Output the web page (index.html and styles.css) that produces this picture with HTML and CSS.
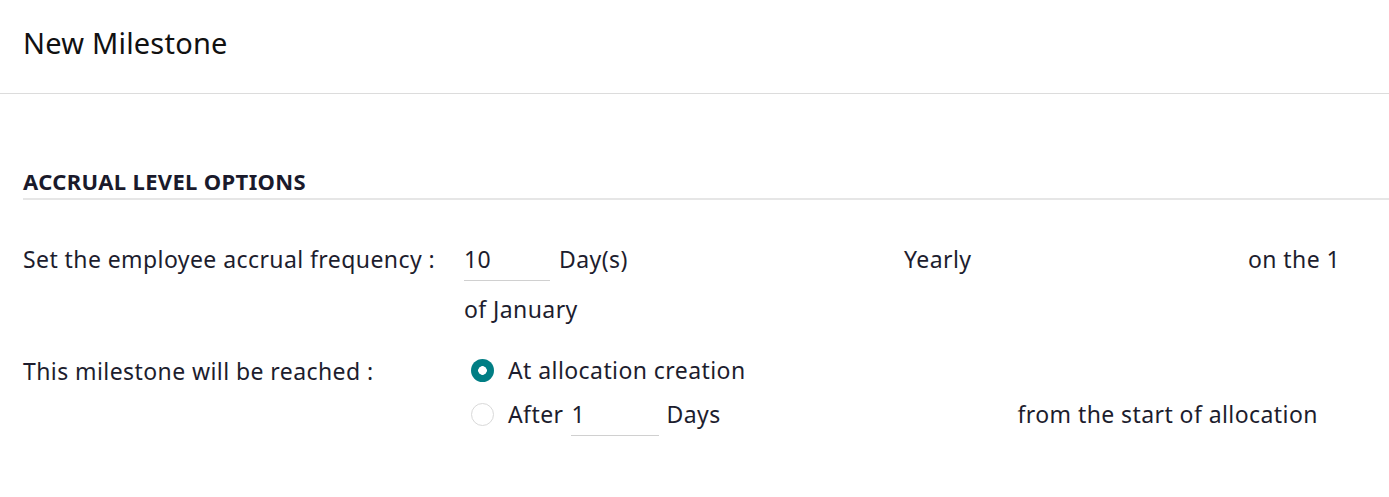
FILE: index.html
```html
<!DOCTYPE html>
<html>
<head>
<meta charset="utf-8">
<link rel="stylesheet" href="styles.css">
</head>
<body>
<div class="header">
  <h1 class="title">New Milestone</h1>
</div>
<div class="sheet">
  <div class="section-title">ACCRUAL LEVEL OPTIONS</div>
  <div class="form-grid">
    <div class="label label-freq">Set the employee accrual frequency :</div>
    <div class="field-freq">
      <div class="line line-a">
        <span class="input input-added">10</span>
        <span class="cell cell-unit">Day(s)</span>
        <span class="cell cell-freq">Yearly</span>
        <span class="cell">on the 1</span>
      </div>
      <div class="line line-b">of January</div>
    </div>
    <div class="label label-reach">This milestone will be reached :</div>
    <div class="field-reach">
      <div class="radio-line">
        <span class="radio radio-on"></span>
        <span>At allocation creation</span>
      </div>
      <div class="radio-line">
        <span class="radio"></span>
        <span class="after">After</span>
        <span class="input input-start">1</span>
        <span class="cell cell-days">Days</span>
        <span class="cell">from the start of allocation</span>
      </div>
    </div>
  </div>
  <div class="spacer"></div>
</div>
</body>
</html>
```

FILE: styles.css
```css
* { box-sizing: border-box; }
html, body { margin: 0; padding: 0; background: #fff; }
body {
  font-family: "Noto Sans", "Open Sans", sans-serif;
  font-size: 23px;
  letter-spacing: 0.42px;
  color: #1d1d2e;
  width: 1389px;
}
.header {
  height: 94px;
  border-bottom: 1px solid #dcdcdc;
  padding: 0 23px;
  display: flex;
  align-items: center;
}
.title {
  margin: 0;
  font-weight: 400;
  font-size: 29px;
  letter-spacing: 0.2px;
  color: #111;
  line-height: 1;
  padding-bottom: 8px;
}
.sheet {
  padding-left: 23px;
}
.section-title {
  margin-top: 72px;
  font-weight: 700;
  font-size: 22px;
  letter-spacing: 0.35px;
  line-height: 30px;
  padding-bottom: 2px;
  border-bottom: 2px solid #e6e6e6;
  color: #1a1a2b;
}
.form-grid {
  display: grid;
  grid-template-columns: 441px 1fr;
  margin-top: 37px;
}
.label { line-height: 44px; }
.label-reach { margin-top: 18px; }
.line {
  display: flex;
  align-items: center;
}
.line-a { height: 44px; }
.line-b { height: 44px; margin-top: 6px; }
.input {
  display: block;
  height: 44px;
  line-height: 44px;
  border-bottom: 1px solid #d0d0d0;
  flex: none;
}
.input-added { width: 86px; margin-right: 9px; }
.cell-unit { width: 345px; }
.cell-freq { width: 344px; }
.field-reach { margin-top: 17px; }
.radio-line {
  display: flex;
  align-items: center;
  height: 44px;
  padding-left: 7px;
}
.radio {
  width: 23px;
  height: 23px;
  border-radius: 50%;
  border: 1px solid #d9d9d9;
  margin-right: 14px;
  flex: none;
}
.radio-on {
  border: none;
  background: radial-gradient(circle, #fff 0 4px, #017e84 4.6px);
}
.after { margin-right: 8px; }
.input.input-start {
  width: 88px;
  margin-right: 7px;
}
.cell-days { width: 351px; }
.spacer { height: 40px; }
```
